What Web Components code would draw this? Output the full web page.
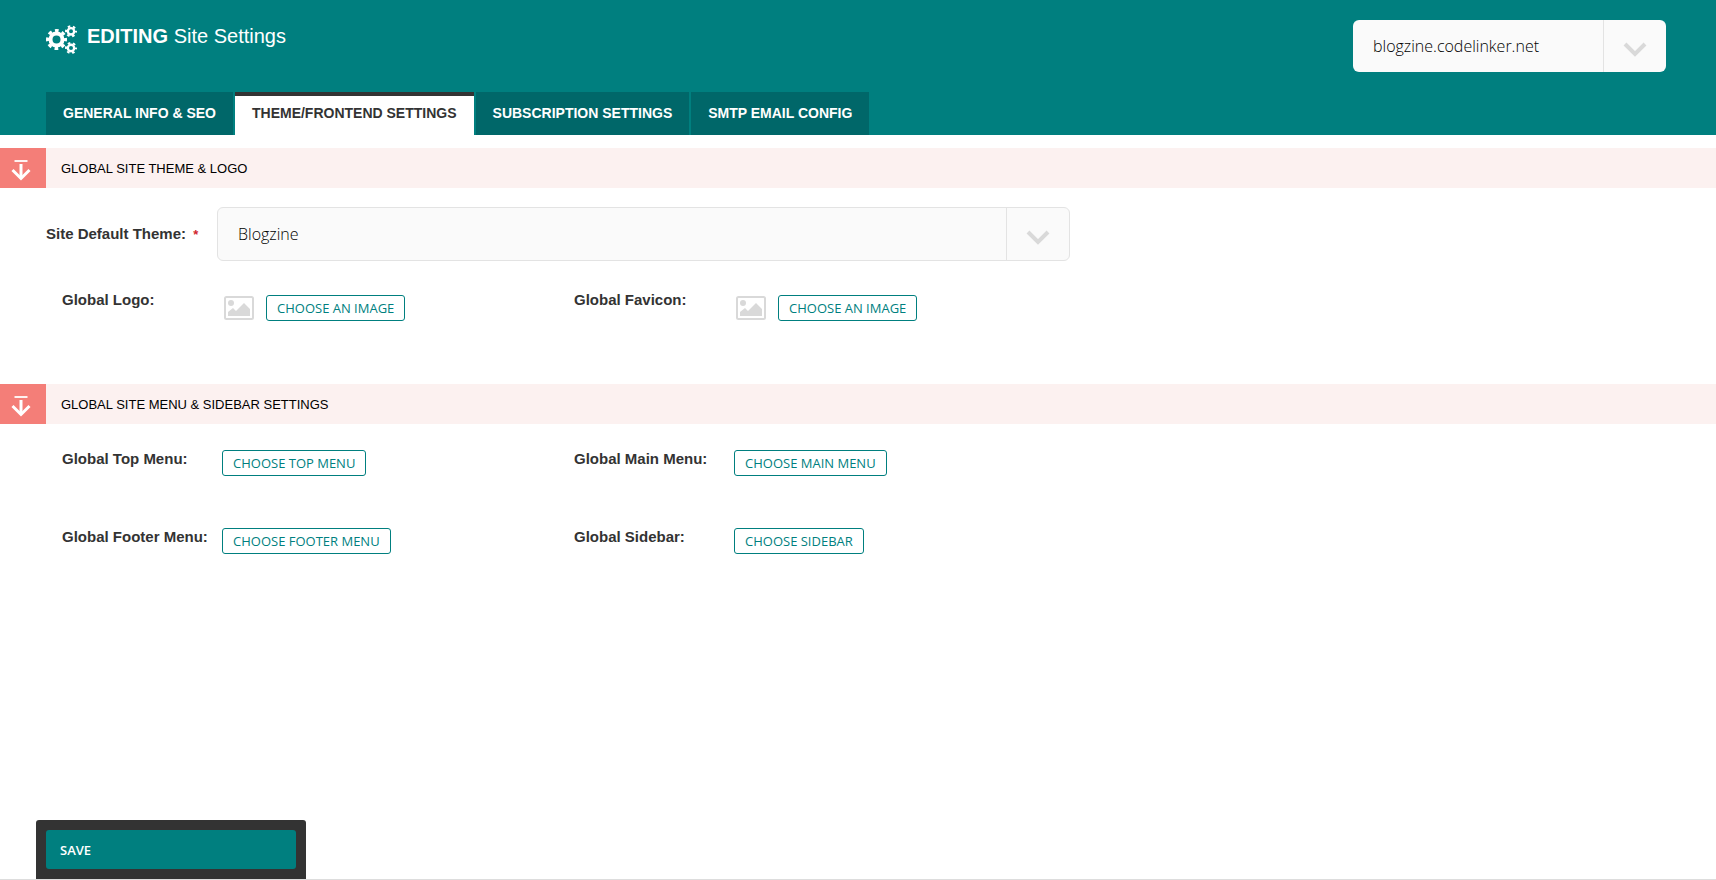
<!DOCTYPE html>
<html lang="en">
<head>
<meta charset="utf-8">
<meta name="viewport" content="width=device-width, initial-scale=1">
<title>Site Settings</title>
<style>
  html, body { margin: 0; }
  body {
    --teal: #007f7f;
    --teal-dark: #006769;
    --ink: #333;
    --line: #e3e3e3;
    --sans: "Liberation Sans", Arial, sans-serif;
    --open: "Open Sans", sans-serif;
    background: #fff;
    color: var(--ink);
    font: 15px/20px var(--sans);
  }
</style>
</head>
<body>
<settings-page></settings-page>

<script>
const define = (name, html, setup) => {
  const template = document.createElement('template');
  template.innerHTML = html;
  customElements.define(name, class extends HTMLElement {
    constructor() {
      super();
      this.attachShadow({ mode: 'open' }).append(template.content.cloneNode(true));
    }
    connectedCallback() {
      if (setup && !this.ready) { this.ready = true; setup(this, this.shadowRoot); }
    }
  });
};

/* Select box with a divided arrow cell and an optional label beside it */
define('select-box', `
  <style>
    :host { display: grid; grid-template-columns: auto 1fr; align-items: center; }
    label { font-weight: 700; width: 171px; }
    label[hidden] { display: none; }
    b { color: #d0262d; font-size: 13px; margin-left: 3px; }
    div { grid-column: 2; display: grid; grid-template-columns: 1fr 63px; box-sizing: border-box; height: 52px;
      border-radius: 6px; background: #fafafa; }
    :host([bordered]) div { height: 54px; border: 1px solid var(--line); }
    select { grid-area: 1 / 1 / 2 / 3; appearance: none; width: 100%; height: 100%; margin: 0; border: 0;
      padding: 0 82px 0 20px; background: transparent; border-radius: 6px; color: #000;
      font: 300 16px/20px var(--open); }
    span { grid-area: 1 / 2; display: flex; align-items: center; justify-content: center;
      padding-top: 8px; border-left: 1px solid var(--line); pointer-events: none; z-index: 1; }
  </style>
  <label for="field"><slot></slot> <b>*</b></label>
  <div>
    <select id="field"></select>
    <span><svg width="24" height="16" viewBox="0 0 24 16" fill="none" stroke="#d9d9d9" stroke-width="4"><path d="M2 2l10 10L22 2"/></svg></span>
  </div>
`, (el, root) => {
  const select = root.querySelector('select');
  if (el.hasAttribute('name')) {
    root.querySelector('label').hidden = true;
    select.setAttribute('aria-label', el.getAttribute('name'));
  }
  select.add(new Option(el.getAttribute('value')));
});

/* Page title with gears */
define('page-title', `
  <style>
    :host { display: flex; gap: 9px; padding-top: 4px; }
    svg { display: block; margin-top: 1px; }
    h1 { margin: 0; font: 400 20px/24px var(--sans); color: #fff; }
  </style>
  <svg width="32" height="30" viewBox="0 0 32 30" fill="none" stroke="#fff" aria-hidden="true">
    <g><circle cx="10.500" cy="14.500" r="6" stroke-width="4"/><circle cx="10.500" cy="14.500" r="9" stroke-width="3" stroke-dasharray="3.700 3.369" stroke-dashoffset="1.850"/></g>
    <g><circle cx="25" cy="6.300" r="3.200" stroke-width="2.400"/><circle cx="25" cy="6.300" r="5" stroke-width="2" stroke-dasharray="2.500 2.736" stroke-dashoffset="1.250"/></g>
    <g><circle cx="25" cy="23" r="3.200" stroke-width="2.400"/><circle cx="25" cy="23" r="5" stroke-width="2" stroke-dasharray="2.500 2.736" stroke-dashoffset="1.250"/></g>
  </svg>
  <h1><slot></slot></h1>
`);

/* Tab link */
define('tab-link', `
  <style>
    :host { display: block; }
    a { display: block; box-sizing: border-box; height: 43px; padding: 7px 17px 0; border-top: 4px solid var(--teal-dark);
      background: var(--teal-dark); color: #fff; font: 700 14px/20px var(--sans); text-decoration: none; white-space: nowrap; }
    :host([active]) a { background: #fff; border-top-color: #333; color: var(--ink); }
  </style>
  <a href="#"><slot></slot></a>
`);

/* Section with its tinted heading bar */
define('settings-section', `
  <style>
    :host { display: block; }
    header { display: flex; align-items: center; height: 40px; background: #fcf1f0; }
    i { display: flex; align-items: center; box-sizing: border-box; width: 46px; height: 40px; padding: 4px 0 0 11px; margin-right: 15px; background: #f47e78; }
    h2 { margin: 0; padding-top: 2px; font: 400 13px/20px var(--sans); color: #000; }
    div { max-width: 1024px; margin: 0 46px; }
  </style>
  <header>
    <i><svg width="20" height="21" viewBox="0 0 20 21" fill="none" stroke="#fff"><path d="M3.500 1h13" stroke-width="1.800"/><path d="M10 4v14" stroke-width="3"/><path d="M1.500 10L10 18.500 18.500 10" stroke-width="3"/></svg></i>
    <h2></h2>
  </header>
  <div><slot></slot></div>
`, (el, root) => { root.querySelector('h2').textContent = el.getAttribute('heading'); });

/* Label with a chooser button, optionally preceded by an image placeholder */
define('choice-field', `
  <style>
    :host { display: grid; grid-template-columns: 160px 1fr; align-items: start; padding-left: 16px; }
    label { font-weight: 700; white-space: nowrap; }
    div { display: flex; align-items: center; gap: 12px; padding-top: 1px; }
    :host([image]) div { padding-top: 5px; }
    svg { display: none; }
    :host([image]) svg { display: block; margin-left: 2px; }
    button { box-sizing: border-box; height: 26px; padding: 0 10px; border: 1px solid var(--teal); border-radius: 3px;
      background: #fff; color: var(--teal); font: 400 13px/20px var(--open); white-space: nowrap; }
  </style>
  <label for="choose"></label>
  <div>
    <svg width="30" height="24" viewBox="0 0 30 24" aria-hidden="true"><rect x="1" y="1" width="28" height="22" rx="1.500" fill="#fff" stroke="#d9d9d9" stroke-width="2"/><circle cx="7" cy="7" r="3" fill="#d9d9d9"/><path d="M4 20v-4l5-4 3 3 8-8 6 6v7z" fill="#d9d9d9"/></svg>
    <button id="choose" type="button"><slot></slot></button>
  </div>
`, (el, root) => { root.querySelector('label').textContent = el.getAttribute('label'); });

/* Save panel docked to the bottom of the window */
define('save-bar', `
  <style>
    :host { display: block; position: sticky; bottom: 0; padding: 0 36px; border-bottom: 1px solid #ddd; }
    div { box-sizing: border-box; width: 270px; padding: 10px; border-radius: 3px 3px 0 0; background: #333; }
    button { display: block; width: 100%; height: 39px; padding: 0 14px; border: 0; border-radius: 3px; background: var(--teal);
      color: #fff; font: 600 13px/20px var(--open); text-align: left; }
  </style>
  <div><button type="submit"><slot></slot></button></div>
`);

define('settings-page', `
  <style>
    :host { display: flex; flex-direction: column; min-height: 100vh; }
    .top { display: flex; justify-content: space-between; align-items: start; box-sizing: border-box; height: 92px; padding: 20px 50px 0 46px; }
    .top select-box { width: 313px; }
    .head { background: var(--teal); }
    nav { display: flex; gap: 2px; padding-left: 46px; }
    main { flex: 1; padding-top: 13px; }
    .theme { padding-top: 19px; }
    .grid { display: grid; grid-template-columns: 1fr 1fr; }
    .logos { padding: 29px 0 63px; }
    .menus { padding: 25px 0; row-gap: 51px; }
  </style>
  <div class="head">
    <div class="top">
      <page-title><b>EDITING</b> Site Settings</page-title>
      <select-box name="Site" value="blogzine.codelinker.net"></select-box>
    </div>
    <nav>
      <tab-link>GENERAL INFO &amp; SEO</tab-link>
      <tab-link active>THEME/FRONTEND SETTINGS</tab-link>
      <tab-link>SUBSCRIPTION SETTINGS</tab-link>
      <tab-link>SMTP EMAIL CONFIG</tab-link>
    </nav>
  </div>
  <main>
    <settings-section heading="GLOBAL SITE THEME &amp; LOGO">
      <select-box class="theme" bordered value="Blogzine">Site Default Theme:</select-box>
      <div class="grid logos">
        <choice-field image label="Global Logo:">CHOOSE AN IMAGE</choice-field>
        <choice-field image label="Global Favicon:">CHOOSE AN IMAGE</choice-field>
      </div>
    </settings-section>
    <settings-section heading="GLOBAL SITE MENU &amp; SIDEBAR SETTINGS">
      <div class="grid menus">
        <choice-field label="Global Top Menu:">CHOOSE TOP MENU</choice-field>
        <choice-field label="Global Main Menu:">CHOOSE MAIN MENU</choice-field>
        <choice-field label="Global Footer Menu:">CHOOSE FOOTER MENU</choice-field>
        <choice-field label="Global Sidebar:">CHOOSE SIDEBAR</choice-field>
      </div>
    </settings-section>
  </main>
  <save-bar>SAVE</save-bar>
`);
</script>
</body>
</html>
